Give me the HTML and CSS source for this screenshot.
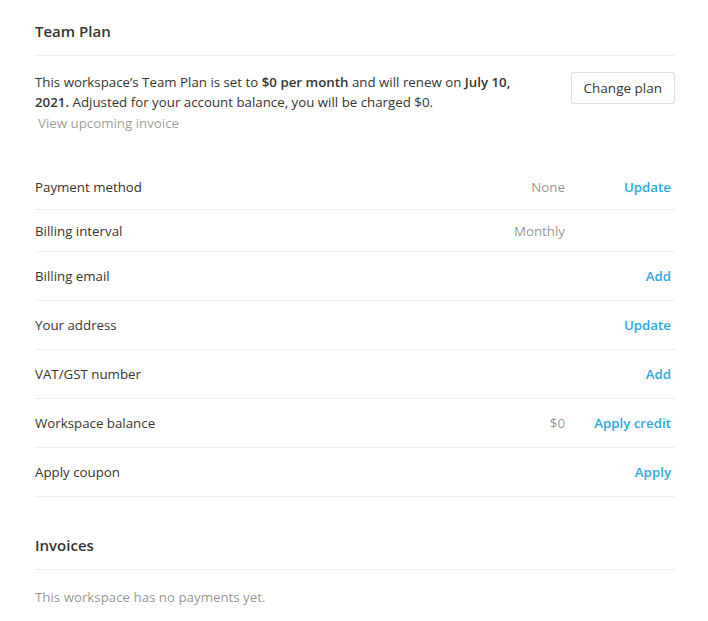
FILE: index.html
```html
<!DOCTYPE html>
<html>
<head>
<meta charset="utf-8">
<link rel="stylesheet" href="styles.css">
</head>
<body>
<div class="page">
  <section class="section">
    <h2 class="heading">Team Plan</h2>
    <div class="plan">
      <div class="plan-text">
        <p class="desc">This workspace’s Team Plan is set to <b>$0 per month</b> and will renew on <b>July 10, 2021.</b> Adjusted for your account balance, you will be charged $0.</p>
        <a class="muted-link">View upcoming invoice</a>
      </div>
      <button class="btn">Change plan</button>
    </div>
    <div class="rows">
      <div class="row tall"><span class="label">Payment method</span><span class="value">None</span><span class="action">Update</span></div>
      <div class="row"><span class="label">Billing interval</span><span class="value">Monthly</span><span class="action"></span></div>
      <div class="row tall"><span class="label">Billing email</span><span class="value"></span><span class="action">Add</span></div>
      <div class="row tall"><span class="label">Your address</span><span class="value"></span><span class="action">Update</span></div>
      <div class="row tall"><span class="label">VAT/GST number</span><span class="value"></span><span class="action">Add</span></div>
      <div class="row tall"><span class="label">Workspace balance</span><span class="value">$0</span><span class="action">Apply credit</span></div>
      <div class="row tall"><span class="label">Apply coupon</span><span class="value"></span><span class="action">Apply</span></div>
    </div>
  </section>
  <section class="section invoices">
    <h2 class="heading">Invoices</h2>
    <p class="empty">This workspace has no payments yet.</p>
  </section>
</div>
</body>
</html>
```
FILE: styles.css
```css
* { box-sizing: border-box; }
html, body { margin: 0; background: #fff; }
body {
  font-family: "Open Sans", "Noto Sans", sans-serif;
  font-size: 13.3px;
  color: #37352f;
}
.page { padding: 19px 33px 0 35px; width: 708px; }
.heading {
  margin: 0;
  font-size: 15px;
  font-weight: 600;
  line-height: 24px;
  padding-bottom: 12px;
  border-bottom: 1px solid rgba(55,53,47,0.09);
}
.plan {
  display: flex;
  align-items: flex-start;
  justify-content: space-between;
  padding-top: 16px;
}
.plan-text { width: 490px; }
.desc { margin: 0; line-height: 20px; }
.desc b { font-weight: 600; }
.muted-link {
  display: block;
  margin-left: 3px;
  line-height: 22px;
  color: rgba(55,53,47,0.5);
}
.btn {
  font: inherit;
  font-size: 13.5px;
  color: #37352f;
  background: #fff;
  border: 1px solid rgba(55,53,47,0.16);
  border-radius: 3px;
  height: 32px;
  padding: 0 12px;
  margin-top: 0;
}
.rows { margin-top: 31px; }
.row {
  display: flex;
  align-items: center;
  height: 42px;
  border-bottom: 1px solid rgba(55,53,47,0.09);
}
.row.tall { height: 49px; }
.row:first-child { height: 45px; }
.label { flex: 1; }
.value { color: rgba(55,53,47,0.55); }
.action {
  width: 110px;
  text-align: right;
  padding-right: 4px;
  color: #2eaadc;
  font-weight: 600;
}
.invoices { margin-top: 36px; }
.empty {
  margin: 16px 0 0;
  line-height: 22px;
  color: rgba(55,53,47,0.55);
}
```
